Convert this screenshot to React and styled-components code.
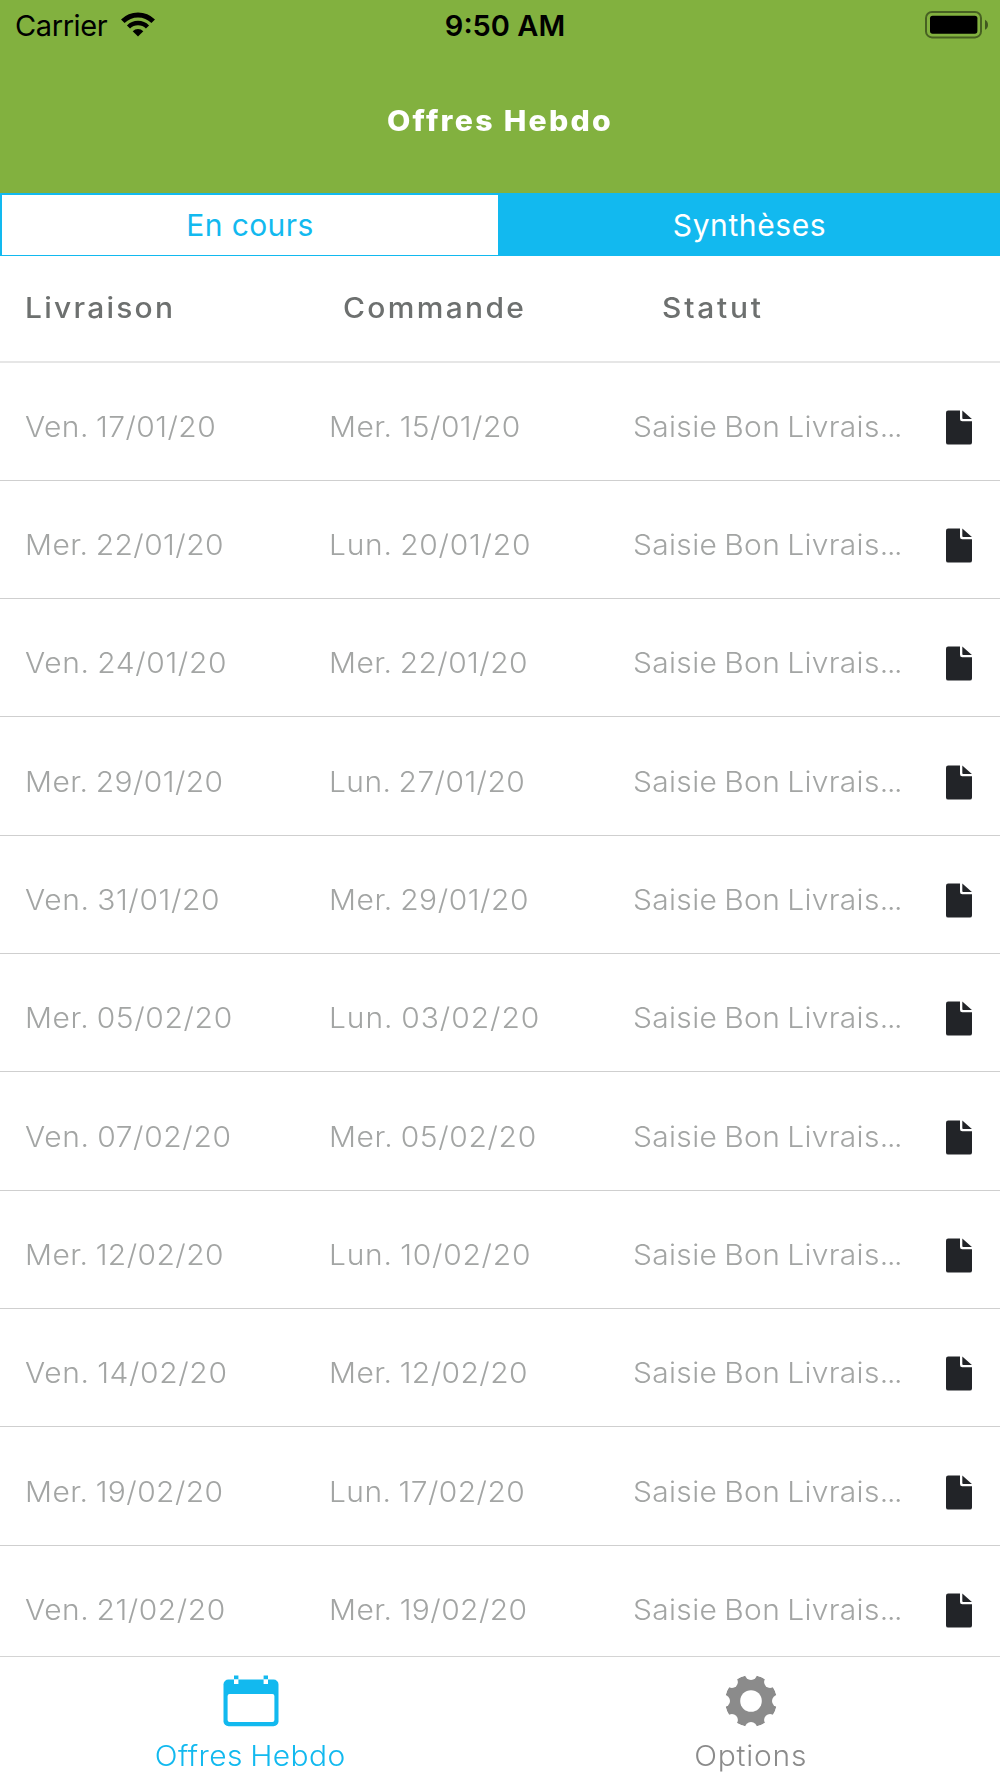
import React from 'react'
import styled, { createGlobalStyle } from 'styled-components'

// each cell: text, letter spacing in px
const offers = [
  { delivery: ['Ven. 17/01/20', 0.4], order: ['Mer. 15/01/20', 0.4] },
  { delivery: ['Mer. 22/01/20', 0.4], order: ['Lun. 20/01/20', 0.7] },
  { delivery: ['Ven. 24/01/20', 0.6], order: ['Mer. 22/01/20', 0.4] },
  { delivery: ['Mer. 29/01/20', 0.4], order: ['Lun. 27/01/20', 0.4] },
  { delivery: ['Ven. 31/01/20', 0.6], order: ['Mer. 29/01/20', 0.5] },
  { delivery: ['Mer. 05/02/20', 0.6], order: ['Lun. 03/02/20', 0.9] },
  { delivery: ['Ven. 07/02/20', 0.6], order: ['Mer. 05/02/20', 0.6] },
  { delivery: ['Mer. 12/02/20', 0.4], order: ['Lun. 10/02/20', 0.7] },
  { delivery: ['Ven. 14/02/20', 0.6], order: ['Mer. 12/02/20', 0.4] },
  { delivery: ['Mer. 19/02/20', 0.4], order: ['Lun. 17/02/20', 0.4] },
  { delivery: ['Ven. 21/02/20', 0.5], order: ['Mer. 19/02/20', 0.4] },
]

const WifiIcon = () => (
  <svg width="36" height="26" viewBox="0 0 36 26">
    <g fill="none" stroke="#000">
      <path d="M2.8 9.3A21.5 21.5 0 0 1 33.2 9.3" strokeWidth="5" />
      <path d="M8.5 15A13.4 13.4 0 0 1 27.5 15" strokeWidth="4.4" />
    </g>
    <path d="M18 24.5L12.7 19.2A7.5 7.5 0 0 1 23.3 19.2Z" />
  </svg>
)

const BatteryIcon = () => (
  <svg width="63" height="28" viewBox="0 0 63 28">
    <rect
      x="1"
      y="1"
      width="55"
      height="25.4"
      rx="6"
      fill="none"
      stroke="#000"
      strokeOpacity="0.45"
      strokeWidth="2"
    />
    <rect x="5" y="4.7" width="47.4" height="18" rx="2.6" />
    <path d="M60 8.7Q63 10.2 63 13.7T60 18.7Z" fillOpacity="0.5" />
  </svg>
)

const FileIcon = () => (
  <svg width="26" height="35" viewBox="0 0 26 35" fill="#222428">
    <path d="M2.2 0.5H14V9Q14 11.3 16.3 11.3H26V32.4Q26 34.6 23.8 34.6H2.2Q0 34.6 0 32.4V2.7Q0 0.5 2.2 0.5Z" />
    <path d="M16.3 0.6L25.9 9H17.2Q16.3 9 16.3 8.1Z" />
  </svg>
)

const CalendarIcon = () => (
  <svg width="56" height="52" viewBox="0 0 56 52">
    <rect x="0.5" y="4.6" width="55" height="46.6" rx="5" fill="#12b9ef" />
    <rect x="4.6" y="19" width="46.8" height="28" rx="2" fill="#fff" />
    <path d="M11 4.6H15.4V9H11ZM40.6 4.6H45V9H40.6Z" fill="#fff" />
    <path d="M11 0.4H15.4V4H11ZM40.6 0.4H45V4H40.6Z" fill="#12b9ef" />
  </svg>
)

const GearIcon = () => (
  <svg width="52" height="52" viewBox="-26 -26 52 52">
    <mask id="gear" x="-26" y="-26" width="52" height="52" maskUnits="userSpaceOnUse">
      <circle r="26" fill="#fff" />
      <circle r="10.8" fill="#000" />
      {[0, 45, 90, 135, 180, 225, 270, 315].map(angle => (
        <circle
          key={angle}
          cy="-27"
          r="6"
          fill="#000"
          transform={`rotate(${angle})`}
        />
      ))}
    </mask>
    <circle r="26" fill="#8b8b8b" mask="url(#gear)" />
  </svg>
)

const App = () => {
  return (
    <Screen>
      <GlobalStyle />
      <Header>
        <StatusBar>
          <Carrier>
            Carrier <WifiIcon />
          </Carrier>
          <Time>9:50 AM</Time>
          <Battery>
            <BatteryIcon />
          </Battery>
        </StatusBar>
        <Title>Offres Hebdo</Title>
      </Header>
      <Segments>
        <Segment>En cours</Segment>
        <Segment $active>Synthèses</Segment>
      </Segments>
      <TableHead>
        <Cell $tracking={2.1}>Livraison</Cell>
        <Cell $tracking={2.2}>Commande</Cell>
        <Cell $tracking={2.6}>Statut</Cell>
      </TableHead>
      <List>
        {offers.map(({ delivery, order }) => (
          <Row key={delivery[0]}>
            <Cell $tracking={delivery[1]}>{delivery[0]}</Cell>
            <Cell $tracking={order[1]}>{order[0]}</Cell>
            <Cell $tracking={0.3}>
              Saisie Bon Livrais<Dots>...</Dots>
            </Cell>
            <FileIcon />
          </Row>
        ))}
      </List>
      <TabBar>
        <Tab $active>
          <CalendarIcon />
          <Label $tracking={0.4}>Offres Hebdo</Label>
        </Tab>
        <Tab>
          <GearIcon />
          <Label $tracking={0.7}>Options</Label>
        </Tab>
      </TabBar>
    </Screen>
  )
}

const GlobalStyle = createGlobalStyle`
  body {
    margin: 0;
    background-color: #fff;
  }
  svg {
    display: block;
    flex-shrink: 0;
  }
`

const Screen = styled.div`
  display: flex;
  flex-direction: column;
  width: 1000px;
  height: 1778px;
  overflow: hidden;
  background-color: #fff;
  font-family: Inter, 'Liberation Sans', sans-serif;
  white-space: nowrap;
`

const Header = styled.header`
  flex: none;
  height: 193px;
  background-color: #82b13f;
`

const StatusBar = styled.div`
  display: grid;
  grid-template-columns: 1fr auto 1fr;
  align-items: center;
  height: 50px;
  padding: 0 12px 0 15px;
  color: #000;
  font-size: 29px;
  line-height: 50px;
`

const Carrier = styled.div`
  display: flex;
  align-items: center;
  gap: 13px;
  padding-top: 1px;
  letter-spacing: -0.4px;

  svg {
    margin-top: -2px;
  }
`

const Time = styled.div`
  padding: 1px 0 0 7px;
  font-weight: 600;
  letter-spacing: 0;
`

const Battery = styled.div`
  display: flex;
  justify-content: flex-end;
  padding-bottom: 1px;
`

const Title = styled.h1`
  margin: 0;
  padding-top: 51px;
  color: #fff;
  font-size: 28px;
  font-weight: 800;
  line-height: 40px;
  letter-spacing: 2.1px;
  text-align: center;
  transform: scaleX(1.08);
`

const Segments = styled.div`
  display: grid;
  flex: none;
  grid-template-columns: 496px 1fr;
  box-sizing: border-box;
  height: 63px;
  border: 2px solid #12b9ef;
`

const Segment = styled.div`
  color: ${({ $active }) => ($active ? '#fff' : '#12b9ef')};
  background-color: ${({ $active }) => ($active ? '#12b9ef' : '#fff')};
  font-size: 30px;
  line-height: 60px;
  letter-spacing: ${({ $active }) => ($active ? '0.6px' : '0.4px')};
  text-align: center;
  text-indent: ${({ $active }) => ($active ? '3px' : '0')};
`

// the face is set slightly extended, anchored to the start of its column
const Cell = styled.span`
  letter-spacing: ${({ $tracking }) => $tracking}px;
  word-spacing: -1.5px;
  transform: scaleX(1.07);
  transform-origin: left center;
`

const Label = styled(Cell)`
  margin-top: 9px;
  transform-origin: center;
`

const Dots = styled.span`
  letter-spacing: -1.2px;
`

const TableHead = styled.div`
  display: grid;
  flex: none;
  grid-template-columns: 318px 319px 1fr;
  box-sizing: border-box;
  height: 107px;
  padding: 0 25px;
  border-bottom: 2px solid #e6e6e6;
  color: #6d706f;
  font-size: 28px;
  font-weight: 450;
  line-height: 105px;
`

const List = styled.div`
  flex: 1;
  min-height: 0;
  margin-top: -0.5px;
  overflow: hidden;
`

const Row = styled.div`
  display: grid;
  grid-template-columns: 304px 304px 313px 26px;
  align-items: center;
  box-sizing: border-box;
  height: 118.33px;
  padding: 11px 25px 0;
  border-bottom: 1px solid #cfcfcf;
  color: #a3a5a4;
  font-size: 28px;
  font-weight: 300;
  line-height: 40px;

  svg {
    margin-top: 1px;
  }
`

const TabBar = styled.nav`
  display: flex;
  flex: none;
  box-sizing: border-box;
  height: 122px;
  border-top: 1px solid #d4d4d4;
`

const Tab = styled.div`
  display: flex;
  flex: 1;
  flex-direction: column;
  align-items: center;
  padding: 18px 0 0 1px;
  color: ${({ $active }) => ($active ? '#12b9ef' : '#8b8b8b')};
  font-size: 28px;
  font-weight: 300;
  line-height: 40px;
`

export default App
